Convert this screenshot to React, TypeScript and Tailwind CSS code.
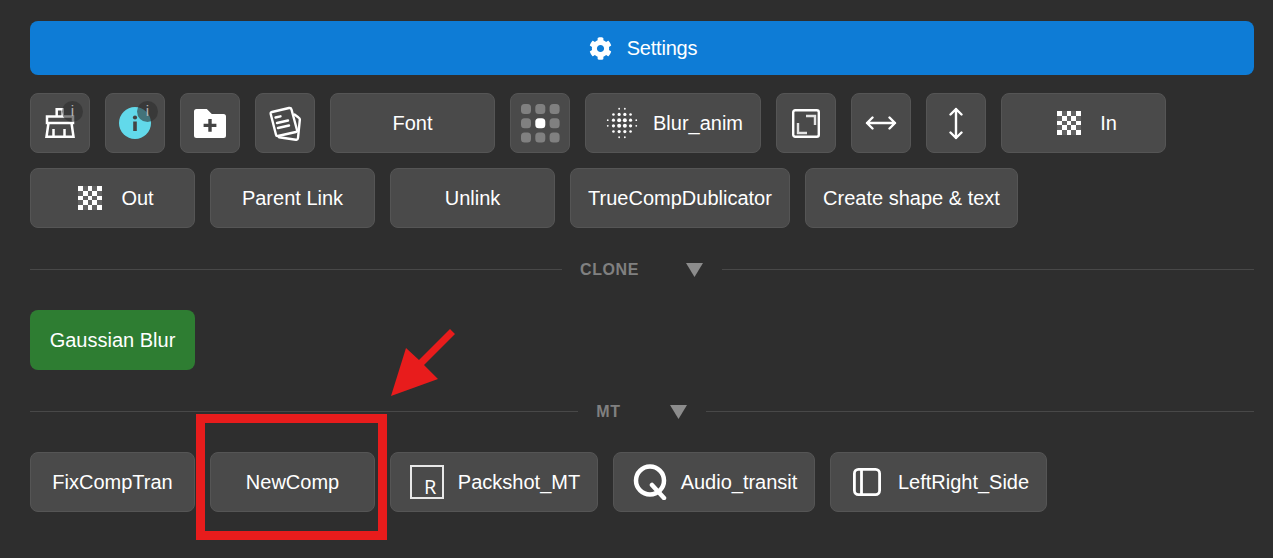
import type { ReactNode } from "react";
import { FaCog } from "react-icons/fa";

const cells5 = [0, 1, 2, 3, 4].flatMap((y) => [0, 1, 2, 3, 4].map((x) => ({ x, y })));

function Checker() {
  return (
    <svg width="24" height="24" viewBox="0 0 24 24" shapeRendering="crispEdges">
      {cells5.map((c) => (
        <rect
          key={`${c.x}-${c.y}`}
          x={0.4 + c.x * 4.65}
          y={0.4 + c.y * 4.65}
          width="4.65"
          height="4.65"
          fill={(c.x + c.y) % 2 === 0 ? "#fff" : "#626262"}
        />
      ))}
    </svg>
  );
}

function Btn({ children, className = "w-[165px]" }: { children: ReactNode; className?: string }) {
  return (
    <button className={`relative h-[60px] shrink-0 flex items-center justify-center rounded-lg border border-[#555555] bg-[#4a4a4a] text-[20px] text-white ${className}`}>
      {children}
    </button>
  );
}

function IconBtn({ children }: { children: ReactNode }) {
  return <Btn className="w-[60px]">{children}</Btn>;
}

function IconText({ icon, label, className }: { icon: ReactNode; label: string; className?: string }) {
  return (
    <Btn className={`pl-[2px] ${className}`}>
      <span className="flex w-[34px] justify-center">{icon}</span>
      <span className="ml-[14px]">{label}</span>
    </Btn>
  );
}

function Badge() {
  return (
    <span className="absolute right-[6px] top-[7px] flex h-[21px] w-[21px] items-center justify-center rounded-full bg-[#2e2e2e]/60 text-[15px] text-[#b5b5b5]">
      i
    </span>
  );
}

function Divider({ label, arrowClass }: { label: string; arrowClass: string }) {
  return (
    <div className="flex h-5 items-center">
      <div className="h-px flex-1 bg-[#484848]" />
      <span className="ml-[18px] pt-[2px] text-[16px] font-bold tracking-[0.6px] text-[#808080]">{label}</span>
      <svg className={arrowClass} width="17" height="14" viewBox="0 0 17 14" fill="#8c8c8c">
        <path d="M0 0h17L8.500 14z" />
      </svg>
      <div className="h-px flex-1 bg-[#484848]" />
    </div>
  );
}

function Broom() {
  return (
    <svg width="30" height="30" viewBox="0 0 30 30" fill="none" stroke="#fff" strokeWidth="2.500">
      <path d="M11.700 8.500V1.300h6V8.500" />
      <rect x="2" y="8.500" width="26" height="6.500" />
      <path d="M3.500 15 1.500 28.700h27L26.500 15" />
      <path d="M8.500 29v-8M19.500 29v-8" />
    </svg>
  );
}

function InfoIcon() {
  return (
    <svg width="32" height="32" viewBox="0 0 32 32">
      <circle cx="16" cy="16" r="16" fill="#62d9ea" />
      <rect x="14.200" y="14.500" width="3.600" height="9.500" fill="#444" />
      <circle cx="16" cy="10.500" r="2.100" fill="#444" />
    </svg>
  );
}

function FolderPlus() {
  return (
    <svg width="32" height="29" viewBox="0 0 32 29">
      <path d="M2.500 0h10.300l5 5h11.700A2.500 2.500 0 0 1 32 7.500v19a2.500 2.500 0 0 1-2.500 2.500h-27A2.500 2.500 0 0 1 0 26.500v-24A2.500 2.500 0 0 1 2.500 0z" fill="#fff" />
      <path d="M14.300 10h3.400v4.700h4.700v3.400h-4.700v4.700h-3.400v-4.700H9.600v-3.400h4.700z" fill="#444" />
    </svg>
  );
}

function Papers() {
  return (
    <svg width="32" height="35" viewBox="0 0 32 35" fill="none" stroke="#fff" strokeWidth="2.400" strokeLinecap="round" strokeLinejoin="round">
      <path d="M3 6 20 2q2-.4 2.500 1.500L28 24q.4 1.600-1.200 2L9 30q-1.700.3-2-1.300L1.700 8Q1.400 6.400 3 6z" />
      <path d="M25.500 8.500 29.500 11.500q1.500.8 1.300 2.500L29 32q-.2 2-2.200 1.800L10 31.200" />
      <path d="M6.500 11.500l5-1.200M8 17l11-2.500M9 22l11-2.500" />
    </svg>
  );
}

function DotsGrid() {
  const cells = [0, 1, 2].flatMap((y) => [0, 1, 2].map((x) => ({ x, y })));
  return (
    <svg width="39" height="39" viewBox="0 0 39 39">
      {cells.map((c) => (
        <rect
          key={`${c.x}-${c.y}`}
          x={c.x * 14.3}
          y={c.y * 14.3}
          width="10"
          height="10"
          rx="3.500"
          fill={c.x === 1 && c.y === 1 ? "#fff" : "#808080"}
        />
      ))}
    </svg>
  );
}

// halftone circle for the blur button
function Halftone() {
  const steps = [-2.5, -1.5, -0.5, 0.5, 1.5, 2.5];
  const dots = steps.flatMap((y) =>
    steps.map((x) => {
      const d = Math.hypot(x, y);
      if (d > 2.8) return null;
      const r = d < 1 ? 2 : d < 2 ? 1.6 : d < 2.3 ? 1.3 : 0.9;
      return <circle key={`${x}/${y}`} cx={17 + x * 5.7} cy={17 + y * 5.7} r={r} />;
    })
  );
  return (
    <svg width="34" height="34" viewBox="0 0 34 34" fill="#fff">
      {dots}
    </svg>
  );
}

function Expand() {
  return (
    <svg width="28" height="29" viewBox="0 0 28 29" fill="none" stroke="#fff" strokeWidth="2.400">
      <rect x="1.200" y="1.200" width="25.600" height="26.600" rx="2" />
      <path d="M14 7h9v9" stroke="#e4e4e4" />
      <path d="M6 14v10h9" stroke="#e4e4e4" />
    </svg>
  );
}

function Horizontal() {
  return (
    <svg width="32" height="14" viewBox="0 0 32 14" fill="none" stroke="#fff" strokeWidth="2.400" strokeLinecap="round" strokeLinejoin="round">
      <path d="M2 7h28M7.500 1.500 2 7l5.500 5.500M24.500 1.500 30 7l-5.500 5.500" />
    </svg>
  );
}

function Vertical() {
  return (
    <svg width="14" height="33" viewBox="0 0 14 33" fill="none" stroke="#fff" strokeWidth="2.400" strokeLinecap="round" strokeLinejoin="round">
      <path d="M7 2v29M1.500 7.500 7 2l5.500 5.500M1.500 25.500 7 31l5.500-5.500" />
    </svg>
  );
}

function Boxed() {
  return (
    <svg width="34" height="34" viewBox="0 0 34 34" fill="none" stroke="#e8e8e8" strokeWidth="2">
      <rect x="1" y="1" width="32" height="32" />
      <text x="14" y="29" fill="#fff" stroke="none" fontSize="20" fontFamily="'Open Sans', sans-serif">R</text>
    </svg>
  );
}

function QIcon() {
  return (
    <svg width="34" height="36" viewBox="0 0 34 36" fill="none" stroke="#fff" strokeWidth="4.500" strokeLinecap="round">
      <circle cx="17" cy="16.500" r="14" />
      <path d="M19 21l12 13" />
    </svg>
  );
}

function Sidebar() {
  return (
    <svg width="28" height="28" viewBox="0 0 28 28" fill="none" stroke="#fff" strokeWidth="2.800">
      <rect x="1.400" y="1.400" width="25.200" height="25.200" rx="4" />
      <path d="M8.500 1.400v25.200" />
    </svg>
  );
}

export default function App() {
  return (
    <div className="relative h-[558px] overflow-hidden bg-[#2e2e2e] pl-[30px] pr-[19px] pt-[21px] font-['Liberation_Sans',Arial,sans-serif]">
      <button className="flex h-[54px] w-full items-center justify-center gap-[15px] rounded-lg bg-[#0e7cd6] pl-[2px] text-[20px] text-white">
        <FaCog size={23} />
        <span className="tracking-[-0.2px]">Settings</span>
      </button>

      <div className="mt-[18px] flex flex-wrap gap-[15px]">
        <IconBtn><Broom /><Badge /></IconBtn>
        <IconBtn><InfoIcon /><Badge /></IconBtn>
        <IconBtn><FolderPlus /></IconBtn>
        <IconBtn><Papers /></IconBtn>
        <Btn>Font</Btn>
        <IconBtn><DotsGrid /></IconBtn>
        <IconText icon={<Halftone />} label="Blur_anim" className="w-[176px]" />
        <IconBtn><Expand /></IconBtn>
        <IconBtn><Horizontal /></IconBtn>
        <IconBtn><Vertical /></IconBtn>
        <IconText icon={<Checker />} label="In" className="w-[165px]" />
        <IconText icon={<Checker />} label="Out" className="w-[165px]" />
        <Btn>Parent Link</Btn>
        <Btn>Unlink</Btn>
        <Btn className="w-[220px]">TrueCompDublicator</Btn>
        <Btn className="w-[213px]">Create shape &amp; text</Btn>
      </div>

      <div className="mt-[31px]">
        <Divider label="CLONE" arrowClass="mt-[2px] ml-[47px] mr-[19px]" />
      </div>

      <div className="mt-[31px] flex">
        <button className="h-[60px] w-[165px] rounded-lg bg-[#2e7d32] text-[20px] text-white">Gaussian Blur</button>
      </div>

      <div className="mt-[31px]">
        <Divider label="MT" arrowClass="mt-[2px] ml-[49px] mr-[19px]" />
      </div>

      <div className="mt-[31px] flex gap-[15px]">
        <Btn>FixCompTran</Btn>
        <Btn>NewComp</Btn>
        <IconText icon={<Boxed />} label="Packshot_MT" className="w-[208px]" />
        <IconText icon={<QIcon />} label="Audio_transit" className="w-[202px]" />
        <IconText icon={<Sidebar />} label="LeftRight_Side" className="w-[217px]" />
      </div>

      {/* annotation drawn over the screenshot */}
      <div className="absolute left-[196px] top-[414px] h-[126px] w-[191px] border-[9px] border-[#e81c1c]" />
      <svg className="absolute left-[385px] top-[325px]" width="75" height="75" viewBox="385 325 75 75" fill="#e81c1c">
        <path d="M391 396 406 348 419 360 450 329 455 334 424 365 438 379z" />
      </svg>
    </div>
  );
}
